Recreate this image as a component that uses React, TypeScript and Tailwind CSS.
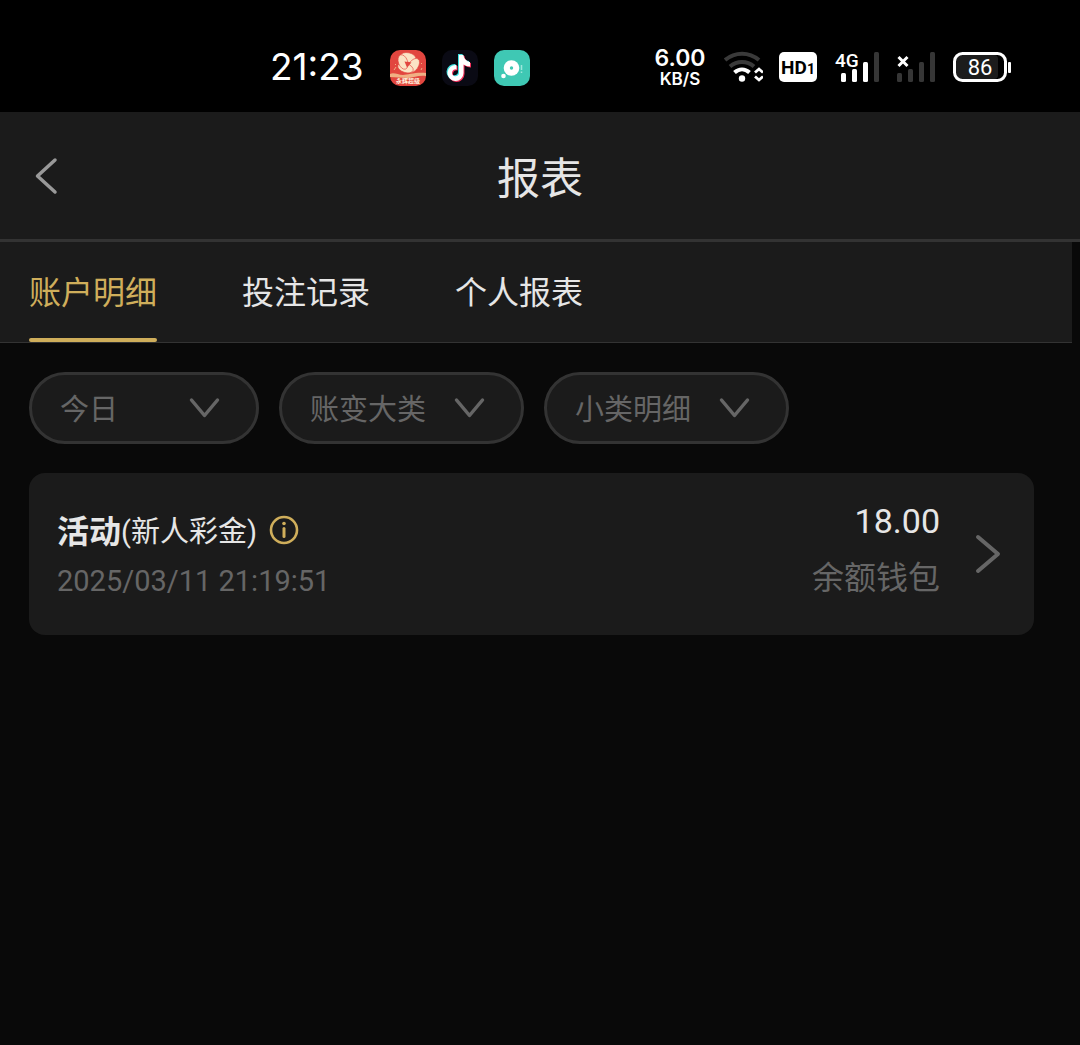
import { useState } from "react";

const tabs = ["账户明细", "投注记录", "个人报表"];

const filters = [
  { id: "date", label: "日期", width: "w-[230px]", options: ["今日", "昨日", "近七日"] },
  { id: "category", label: "大类", width: "w-[245px]", options: ["账变大类"] },
  { id: "detail", label: "小类", width: "w-[245px]", options: ["小类明细"] },
];

const records = [
  {
    id: 1,
    type: "活动",
    note: "(新人彩金)",
    time: "2025/03/11 21:19:51",
    amount: "18.00",
    wallet: "余额钱包",
  },
];

function RedAppIcon() {
  return (
    <svg width="36" height="36" viewBox="0 0 36 36" aria-hidden="true">
      <rect width="36" height="36" rx="10" fill="#e2463f" />
      <path d="M0 24c4-2 8 1 13 1s12-3 23-2v3c-8-1-12 2-18 2S5 27 0 27z" fill="#f0b084" />
      <g fill="#fbe3c4" stroke="#e2463f" strokeWidth="0.600">
        <ellipse cx="18" cy="7.500" rx="8" ry="4.800" transform="rotate(12 18 7.500)" />
        <ellipse cx="23.500" cy="15.500" rx="8" ry="4.800" transform="rotate(125 23.500 15.500)" />
        <ellipse cx="15.500" cy="18" rx="8" ry="4.500" transform="rotate(18 15.500 18)" />
        <ellipse cx="13" cy="12" rx="7.500" ry="4.600" transform="rotate(70 13 12)" />
      </g>
      <path d="M14.500 11.500l7 1-4.500 5z" fill="#e2463f" />
      <path d="M4 20l2-3M5 14l1 1M31 20l1-2M32 13l-1 1" stroke="#f0b084" strokeWidth="1" />
      <text x="18" y="33" textAnchor="middle" fontSize="6" fontWeight="700" fill="#fff3df" fontFamily="Noto Sans CJK SC, sans-serif">
        永辉超级
      </text>
    </svg>
  );
}

function NoteAppIcon() {
  const note = "M17 5h4.500c.5 4 3 6.500 6.500 7v4.500c-2.500 0-4.500-.8-6.500-2V23a8 8 0 1 1-7-8v4.500a3.500 3.500 0 1 0 2.500 3.500z";
  return (
    <svg width="36" height="36" viewBox="0 0 36 36" aria-hidden="true">
      <rect width="36" height="36" rx="10" fill="#0a0a14" />
      <path d={note} fill="#3fe0e0" transform="translate(-1 -1)" />
      <path d={note} fill="#f5325c" transform="translate(1 1)" />
      <path d={note} fill="#fff" />
    </svg>
  );
}

function TealAppIcon() {
  return (
    <svg width="36" height="36" viewBox="0 0 36 36" aria-hidden="true">
      <rect width="36" height="36" rx="10" fill="#3fc8b4" />
      <circle cx="17.500" cy="18" r="7.800" fill="#fff" />
      <circle cx="17.500" cy="18" r="1.700" fill="#3fc8b4" />
      <circle cx="9.500" cy="26" r="2.300" fill="#fff" />
      <path d="M27.500 15v5M27.500 21.500v1.500" stroke="#9fe6db" strokeWidth="1.500" />
    </svg>
  );
}

function WifiIcon() {
  return (
    <svg width="39" height="32" viewBox="0 0 39 32" fill="none" aria-hidden="true">
      <path d="M1 9C11 .5 25 .5 35 9" stroke="#3a3a3a" strokeWidth="4" />
      <path d="M6 15.500c7-6 17-6 24 0" stroke="#3a3a3a" strokeWidth="4" />
      <path d="M10.500 21.500c4.500-4 10.500-4 15 0" stroke="#fff" strokeWidth="4" />
      <circle cx="18" cy="27.500" r="3.200" fill="#fff" />
      <path d="M31 21.500l4-3.500 4 3.500M31 25.500l4 3.500 4-3.500" stroke="#fff" strokeWidth="2.800" />
    </svg>
  );
}

function HdIcon() {
  return (
    <svg width="40" height="30" viewBox="0 0 40 30" fontFamily="Roboto, sans-serif" fontWeight="700" fill="#000" aria-label="HD 1">
      <rect width="38" height="30" rx="5" fill="#fff" />
      <text x="2" y="22" fontSize="19">HD</text>
      <text x="28" y="22" fontSize="14">1</text>
    </svg>
  );
}

function SignalBars({ x, active }: { x: number; active: number }) {
  return (
    <>
      {[9, 13, 20, 30].map((h, i) => (
        <rect key={h} x={x + i * 11} y={30 - h} width="5" height={h} rx="1.500" fill={i < active ? "#fff" : "#363636"} />
      ))}
    </>
  );
}

function BatteryIcon() {
  return (
    <svg width="60" height="30" viewBox="0 0 60 30" aria-label="86%">
      <rect x="5" y="3" width="42" height="24" rx="4" fill="#1c1c1c" />
      <rect x="3.500" y="1.500" width="51" height="27" rx="8" fill="none" stroke="#fff" strokeWidth="3" />
      <rect x="57" y="10" width="3" height="11" rx="1" fill="#fff" />
      <text x="29" y="23" textAnchor="middle" fontSize="22" fill="#fff" fontFamily="Roboto, sans-serif">
        86
      </text>
    </svg>
  );
}

function StatusBar() {
  return (
    <div className="flex h-28 items-center justify-between bg-black pt-6 pr-[69px] pl-[270px] text-white">
      <div className="flex items-center gap-4">
        <span className="mr-2 w-24 pb-0.5 font-[Inter,sans-serif] text-[37px] leading-[40px]">21:23</span>
        <RedAppIcon />
        <NoteAppIcon />
        <TealAppIcon />
      </div>
      <div className="flex items-center gap-4 pb-0.5">
        <div className="flex w-14 flex-col items-center pt-0.5 font-[Inter,sans-serif] font-semibold">
          <span className="text-[23px] leading-[22px]">6.00</span>
          <span className="text-[17px] leading-[20px]">KB/S</span>
        </div>
        <WifiIcon />
        <HdIcon />
        <svg className="overflow-visible" width="45" height="30" viewBox="0 0 45 30" aria-label="4G">
          <text x="0" y="15" fontSize="19" fontWeight="500" fill="#fff" fontFamily="Roboto, sans-serif">4G</text>
          <SignalBars x={6} active={3} />
        </svg>
        <svg width="39" height="30" viewBox="0 0 39 30" aria-label="无信号">
          <path d="M2.500 5l9 9M11.500 5l-9 9" stroke="#fff" strokeWidth="3" />
          <SignalBars x={1} active={0} />
        </svg>
        <BatteryIcon />
      </div>
    </div>
  );
}

export default function App() {
  const [activeTab, setActiveTab] = useState(tabs[0]);

  return (
    <div className="min-h-screen bg-[#090909] font-[Roboto,'Noto_Sans_CJK_SC',sans-serif] text-[#e6e6e6]">
      <StatusBar />

      {/* Header */}
      <header className="grid h-[130px] grid-cols-[80px_1fr_80px] items-center border-b-3 border-[#333] bg-[#1b1b1b]">
        <button type="button" aria-label="返回" className="flex h-16 items-center pl-[34px]">
          <svg width="24" height="38" viewBox="0 0 24 38" fill="none" stroke="#999" strokeWidth="3.500" strokeLinecap="round" strokeLinejoin="round">
            <path d="M21 3L3.500 19 21 35" />
          </svg>
        </button>
        <h1 className="pt-1.5 text-center text-[43px] leading-[64px]">报表</h1>
      </header>

      {/* Tabs */}
      <nav role="tablist" className="mr-2 flex h-[101px] gap-[85px] border-b border-[#333] bg-[#1b1b1b] pl-[29px]">
        {tabs.map((tab) => (
          <button
            key={tab}
            type="button"
            role="tab"
            aria-selected={tab === activeTab}
            onClick={() => setActiveTab(tab)}
            className={`flex flex-col justify-between pt-1.5 text-[32px] ${tab === activeTab ? "text-[#cfae5b]" : ""}`}
          >
            <span className="leading-[90px]">{tab}</span>
            <span className={`h-1 w-full rounded-full ${tab === activeTab ? "bg-[#cfae5b]" : ""}`} />
          </button>
        ))}
      </nav>

      <main className="px-[29px]">
        {/* Filters */}
        <div className="flex gap-5 pt-[29px] text-[#666]">
          {filters.map((filter) => (
            <label key={filter.id} className={`grid items-center ${filter.width}`}>
              <select
                aria-label={filter.label}
                className="col-start-1 row-start-1 h-[72px] w-full appearance-none rounded-full border-3 border-[#333] bg-[#1b1b1b] pt-1.5 pr-16 pl-7 text-[29px]"
              >
                {filter.options.map((option) => (
                  <option key={option}>{option}</option>
                ))}
              </select>
              <svg
                className="pointer-events-none col-start-1 row-start-1 mr-[38px] justify-self-end"
                width="32" height="22" viewBox="0 0 32 22" fill="none" stroke="#666" strokeWidth="3.500" strokeLinecap="round" strokeLinejoin="round"
              >
                <path d="M2.500 3L15.500 18.500 28.500 3" />
              </svg>
            </label>
          ))}
        </div>

        {/* Records */}
        <ul className="mt-[29px] mr-[17px] space-y-5">
          {records.map((record) => (
            <li key={record.id} className="flex rounded-2xl bg-[#1b1b1b] pt-5 pr-8 pb-7 pl-7">
              <div className="grow pt-3.5">
                <div className="flex items-center leading-[50px]">
                  <strong className="text-[32px] font-bold">{record.type}</strong>
                  <span className="text-[29px]">{record.note}</span>
                  <button type="button" aria-label="说明" className="ml-3 pb-1">
                    <svg width="30" height="30" viewBox="0 0 30 30" fill="none" stroke="#cfae5b" strokeWidth="2.600">
                      <circle cx="15" cy="15" r="13" />
                      <path d="M15 13.500v8" strokeWidth="3" strokeLinecap="round" />
                      <circle cx="15" cy="8.500" r="1.800" fill="#cfae5b" stroke="none" />
                    </svg>
                  </button>
                </div>
                <p className="text-[29px] leading-[48px] text-[#666]">{record.time}</p>
              </div>
              <div className="text-right leading-[57px]">
                <p className="text-[34px]">{record.amount}</p>
                <p className="text-[32px] text-[#666]">{record.wallet}</p>
              </div>
              <button type="button" aria-label="查看详情" className="ml-[34px] flex items-center pt-2">
                <svg width="28" height="40" viewBox="0 0 28 40" fill="none" stroke="#666" strokeWidth="4" strokeLinecap="round" strokeLinejoin="round">
                  <path d="M4 3l20 17L4 37" />
                </svg>
              </button>
            </li>
          ))}
        </ul>
      </main>
    </div>
  );
}
